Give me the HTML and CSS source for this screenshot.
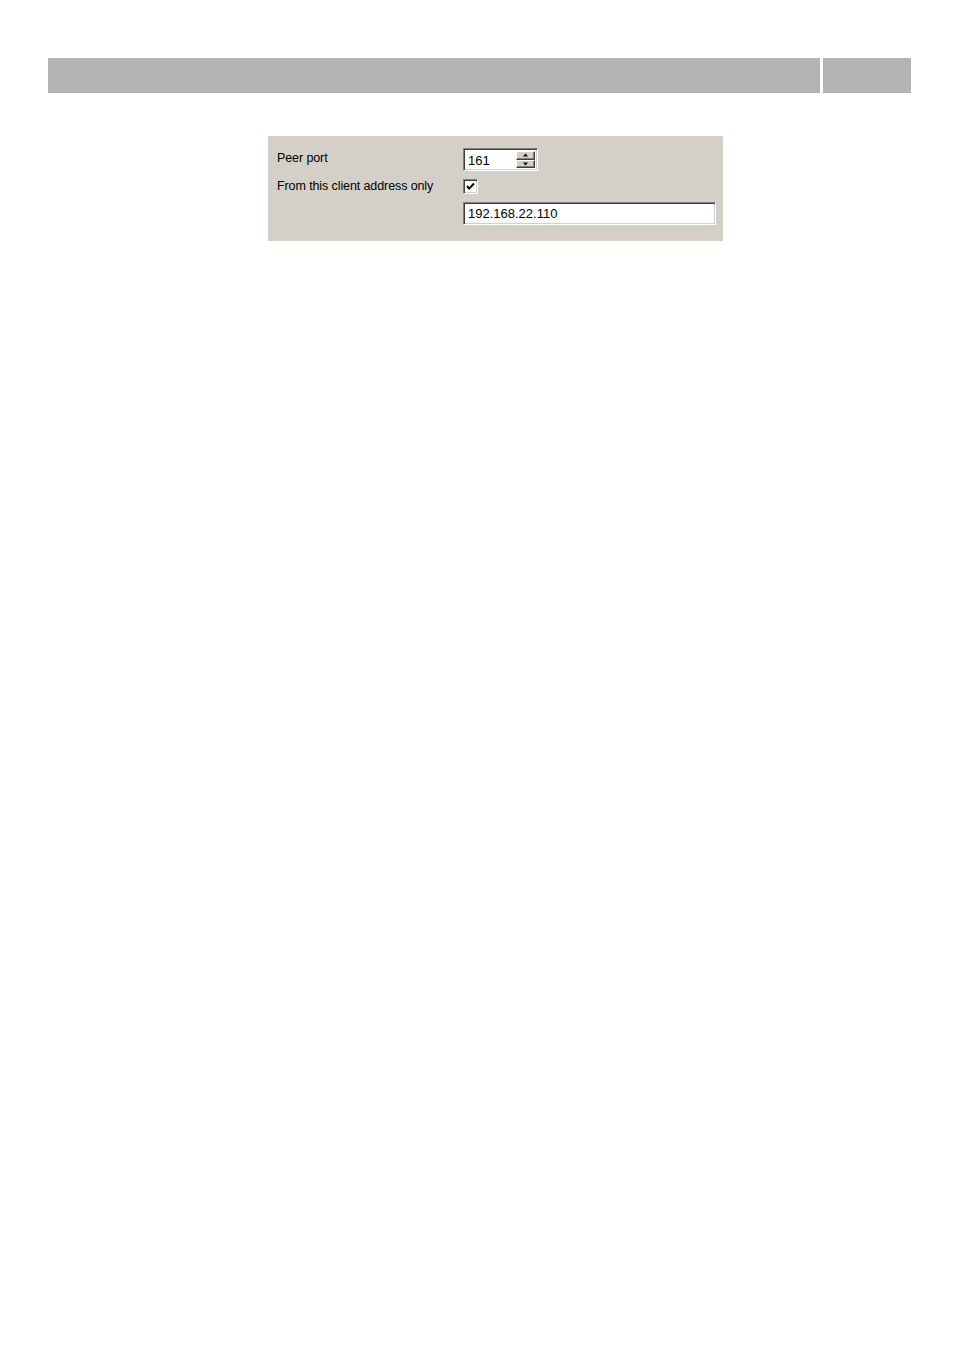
FILE: index.html
```html
<!DOCTYPE html>
<html>
<head>
<meta charset="utf-8">
<link rel="stylesheet" href="styles.css">
</head>
<body>
<div class="header">
  <div class="bar-main"></div>
  <div class="bar-side"></div>
</div>
<div class="panel">
  <div class="row row-port">
    <div class="label">Peer port</div>
    <div class="spin">
      <div class="spin-text">161</div>
      <div class="spin-btns">
        <div class="spin-btn"><svg width="7" height="4" viewBox="0 0 7 4"><path d="M3.5 0.5 L6 3.5 L1 3.5 Z" fill="#000"/></svg></div>
        <div class="spin-btn"><svg width="7" height="4" viewBox="0 0 7 4"><path d="M1 0.5 L6 0.5 L3.5 3.5 Z" fill="#000"/></svg></div>
      </div>
    </div>
  </div>
  <div class="row row-check">
    <div class="label">From this client address only</div>
    <div class="check"><svg width="11" height="11" viewBox="0 0 11 11"><path d="M2 5 L4.2 7.6 L9 2.5" stroke="#000" stroke-width="2" fill="none"/></svg></div>
  </div>
  <div class="row row-addr">
    <div class="label"></div>
    <div class="textbox">192.168.22.110</div>
  </div>
</div>
</body>
</html>
```

FILE: styles.css
```css
html, body {
  margin: 0;
  padding: 0;
  background: #ffffff;
}
body {
  font-family: "Liberation Sans", Arial, sans-serif;
}
.header {
  display: flex;
  gap: 3px;
  margin: 58px 0 0 48px;
  height: 35px;
}
.bar-main {
  width: 772px;
  background: #b3b3b3;
}
.bar-side {
  width: 88px;
  background: #b3b3b3;
}
.panel {
  margin: 43px 0 0 268px;
  width: 455px;
  height: 105px;
  box-sizing: border-box;
  background: #d4d0c8;
  padding: 12px 0 0 9px;
  font-size: 12px;
  color: #000;
}
.row {
  display: flex;
  align-items: center;
}
.label {
  width: 186px;
  flex: none;
  font-size: 12.5px;
  letter-spacing: -0.1px;
}
.row-port {
  height: 23px;
}
.row-port .label {
  position: relative;
  top: -2px;
}
.row-check {
  height: 15px;
  margin-top: 8px;
}
.row-check .label {
  position: relative;
  top: -1px;
}
.row-addr {
  height: 23px;
  margin-top: 8px;
}
.spin, .textbox, .check {
  box-sizing: border-box;
  background: #fff;
  border-top: 1px solid #808080;
  border-left: 1px solid #808080;
  border-bottom: 1px solid #ffffff;
  border-right: 1px solid #ffffff;
  box-shadow: inset 1px 1px 0 #404040, inset -1px -1px 0 #d4d0c8;
}
.spin {
  width: 75px;
  height: 23px;
  display: flex;
  align-items: center;
  padding: 2px 2px 2px 4px;
}
.spin-text {
  flex: 1;
  font-size: 13px;
  padding-top: 1px;
}
.spin-btns {
  display: flex;
  flex-direction: column;
  width: 19px;
  height: 100%;
}
.spin-btn {
  flex: 1;
  background: #d4d0c8;
  box-sizing: border-box;
  border-top: 1px solid #fff;
  border-left: 1px solid #fff;
  border-right: 1px solid #404040;
  border-bottom: 1px solid #404040;
  box-shadow: inset -1px -1px 0 #808080;
  display: flex;
  align-items: center;
  justify-content: center;
}
.check {
  width: 15px;
  height: 15px;
  display: flex;
  align-items: center;
  justify-content: center;
}
.textbox {
  width: 253px;
  height: 23px;
  padding: 3px 0 0 4px;
  font-size: 13px;
  line-height: 16px;
}
```
